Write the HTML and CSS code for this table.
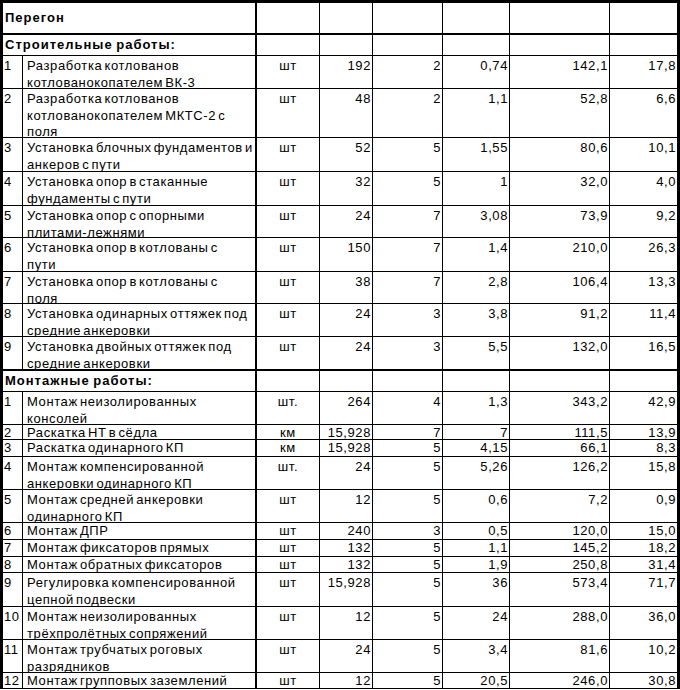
FILE: index.html
```html
<!DOCTYPE html>
<html lang="ru">
<head>
<meta charset="utf-8">
<title>Перегон</title>
<link rel="stylesheet" href="styles.css">
</head>
<body>
<div class="sheet">
  <div class="row h32 thick-b head">
    <div class="c span2 title">Перегон</div><div class="c u"></div><div class="c"></div><div class="c"></div><div class="c"></div><div class="c"></div><div class="c last"></div>
  </div>
  <div class="row h21 head">
    <div class="c span2 title">Строительные работы:</div><div class="c u"></div><div class="c"></div><div class="c"></div><div class="c"></div><div class="c"></div><div class="c last"></div>
  </div>
  <div class="row h33">
    <div class="c n">1</div><div class="c d">Разработка котлованов<br>котлованокопателем ВК-3</div><div class="c u">шт</div><div class="c v">192</div><div class="c v">2</div><div class="c v">0,74</div><div class="c v">142,1</div><div class="c v last">17,8</div>
  </div>
  <div class="row h49">
    <div class="c n">2</div><div class="c d">Разработка котлованов<br>котлованокопателем МКТС-2 с<br>поля</div><div class="c u">шт</div><div class="c v">48</div><div class="c v">2</div><div class="c v">1,1</div><div class="c v">52,8</div><div class="c v last">6,6</div>
  </div>
  <div class="row h34">
    <div class="c n">3</div><div class="c d">Установка блочных фундаментов и<br>анкеров с пути</div><div class="c u">шт</div><div class="c v">52</div><div class="c v">5</div><div class="c v">1,55</div><div class="c v">80,6</div><div class="c v last">10,1</div>
  </div>
  <div class="row h34">
    <div class="c n">4</div><div class="c d">Установка опор в стаканные<br>фундаменты с пути</div><div class="c u">шт</div><div class="c v">32</div><div class="c v">5</div><div class="c v">1</div><div class="c v">32,0</div><div class="c v last">4,0</div>
  </div>
  <div class="row h32">
    <div class="c n">5</div><div class="c d">Установка опор с опорными<br>плитами-лежнями</div><div class="c u">шт</div><div class="c v">24</div><div class="c v">7</div><div class="c v">3,08</div><div class="c v">73,9</div><div class="c v last">9,2</div>
  </div>
  <div class="row h34">
    <div class="c n">6</div><div class="c d">Установка опор в котлованы с<br>пути</div><div class="c u">шт</div><div class="c v">150</div><div class="c v">7</div><div class="c v">1,4</div><div class="c v">210,0</div><div class="c v last">26,3</div>
  </div>
  <div class="row h32">
    <div class="c n">7</div><div class="c d">Установка опор в котлованы с<br>поля</div><div class="c u">шт</div><div class="c v">38</div><div class="c v">7</div><div class="c v">2,8</div><div class="c v">106,4</div><div class="c v last">13,3</div>
  </div>
  <div class="row h33">
    <div class="c n">8</div><div class="c d">Установка одинарных оттяжек под<br>средние анкеровки</div><div class="c u">шт</div><div class="c v">24</div><div class="c v">3</div><div class="c v">3,8</div><div class="c v">91,2</div><div class="c v last">11,4</div>
  </div>
  <div class="row h34 thick-b">
    <div class="c n">9</div><div class="c d">Установка двойных оттяжек под<br>средние анкеровки</div><div class="c u">шт</div><div class="c v">24</div><div class="c v">3</div><div class="c v">5,5</div><div class="c v">132,0</div><div class="c v last">16,5</div>
  </div>
  <div class="row h21 head">
    <div class="c span2 title">Монтажные работы:</div><div class="c u"></div><div class="c"></div><div class="c"></div><div class="c"></div><div class="c"></div><div class="c last"></div>
  </div>
  <div class="row h33">
    <div class="c n">1</div><div class="c d">Монтаж неизолированных<br>консолей</div><div class="c u">шт.</div><div class="c v">264</div><div class="c v">4</div><div class="c v">1,3</div><div class="c v">343,2</div><div class="c v last">42,9</div>
  </div>
  <div class="row h15 single">
    <div class="c n">2</div><div class="c d">Раскатка НТ в сёдла</div><div class="c u">км</div><div class="c v">15,928</div><div class="c v">7</div><div class="c v">7</div><div class="c v">111,5</div><div class="c v last">13,9</div>
  </div>
  <div class="row h17 single">
    <div class="c n">3</div><div class="c d">Раскатка одинарного КП</div><div class="c u">км</div><div class="c v">15,928</div><div class="c v">5</div><div class="c v">4,15</div><div class="c v">66,1</div><div class="c v last">8,3</div>
  </div>
  <div class="row h33">
    <div class="c n">4</div><div class="c d">Монтаж компенсированной<br>анкеровки одинарного КП</div><div class="c u">шт.</div><div class="c v">24</div><div class="c v">5</div><div class="c v">5,26</div><div class="c v">126,2</div><div class="c v last">15,8</div>
  </div>
  <div class="row h33">
    <div class="c n">5</div><div class="c d">Монтаж средней анкеровки<br>одинарного КП</div><div class="c u">шт</div><div class="c v">12</div><div class="c v">5</div><div class="c v">0,6</div><div class="c v">7,2</div><div class="c v last">0,9</div>
  </div>
  <div class="row h17 single">
    <div class="c n">6</div><div class="c d">Монтаж ДПР</div><div class="c u">шт</div><div class="c v">240</div><div class="c v">3</div><div class="c v">0,5</div><div class="c v">120,0</div><div class="c v last">15,0</div>
  </div>
  <div class="row h17 single">
    <div class="c n">7</div><div class="c d">Монтаж фиксаторов прямых</div><div class="c u">шт</div><div class="c v">132</div><div class="c v">5</div><div class="c v">1,1</div><div class="c v">145,2</div><div class="c v last">18,2</div>
  </div>
  <div class="row h16 single">
    <div class="c n">8</div><div class="c d">Монтаж обратных фиксаторов</div><div class="c u">шт</div><div class="c v">132</div><div class="c v">5</div><div class="c v">1,9</div><div class="c v">250,8</div><div class="c v last">31,4</div>
  </div>
  <div class="row h34">
    <div class="c n">9</div><div class="c d">Регулировка компенсированной<br>цепной подвески</div><div class="c u">шт</div><div class="c v">15,928</div><div class="c v">5</div><div class="c v">36</div><div class="c v">573,4</div><div class="c v last">71,7</div>
  </div>
  <div class="row h33">
    <div class="c n">10</div><div class="c d">Монтаж неизолированных<br>трёхпролётных сопряжений</div><div class="c u">шт</div><div class="c v">12</div><div class="c v">5</div><div class="c v">24</div><div class="c v">288,0</div><div class="c v last">36,0</div>
  </div>
  <div class="row h33">
    <div class="c n">11</div><div class="c d">Монтаж трубчатых роговых<br>разрядников</div><div class="c u">шт</div><div class="c v">24</div><div class="c v">5</div><div class="c v">3,4</div><div class="c v">81,6</div><div class="c v last">10,2</div>
  </div>
  <div class="row h16 single">
    <div class="c n">12</div><div class="c d">Монтаж групповых заземлений</div><div class="c u">шт</div><div class="c v">12</div><div class="c v">5</div><div class="c v">20,5</div><div class="c v">246,0</div><div class="c v last">30,8</div>
  </div>
</div>
</body>
</html>
```
FILE: styles.css
```css
* { box-sizing: border-box; }
html, body { margin: 0; padding: 0; background: #fff; }
body {
  font-family: "Liberation Sans", Arial, sans-serif;
  font-size: 13px;
  color: #000;
}
.sheet {
  width: 680px;
  border-top: 3px solid #000;
  border-left: 3px solid #000;
}
.row {
  display: grid;
  grid-template-columns: 20px 234px 63px 53px 70px 67px 100px 70px;
}
.h15 { height: 15px; }
.h16 { height: 16px; }
.h17 { height: 17px; }
.h21 { height: 21px; }
.h32 { height: 32px; }
.h33 { height: 33px; }
.h34 { height: 34px; }
.h49 { height: 49px; }

.c {
  border-right: 1px solid #000;
  border-bottom: 1px solid #000;
  overflow: hidden;
  white-space: nowrap;
  padding-top: 2px;
  line-height: 16.5px;
  letter-spacing: 0.6px;
  word-spacing: -2px;
}
.thick-b .c { border-bottom-width: 2px; }
.c.d, .c.span2 { border-right-width: 2px; }
.c.last { border-right-width: 3px; }
.span2 { grid-column: span 2; }

.single .c { padding-top: 0; line-height: 15px; }

.n { padding-left: 1px; }
.d { padding-left: 4px; }
.u { text-align: center; }
.v { text-align: right; padding-right: 1px; }

.head .c { padding-top: 0; display: flex; align-items: center; }
.title { font-weight: bold; padding-left: 2px; letter-spacing: 1px; word-spacing: -1px; }
```
